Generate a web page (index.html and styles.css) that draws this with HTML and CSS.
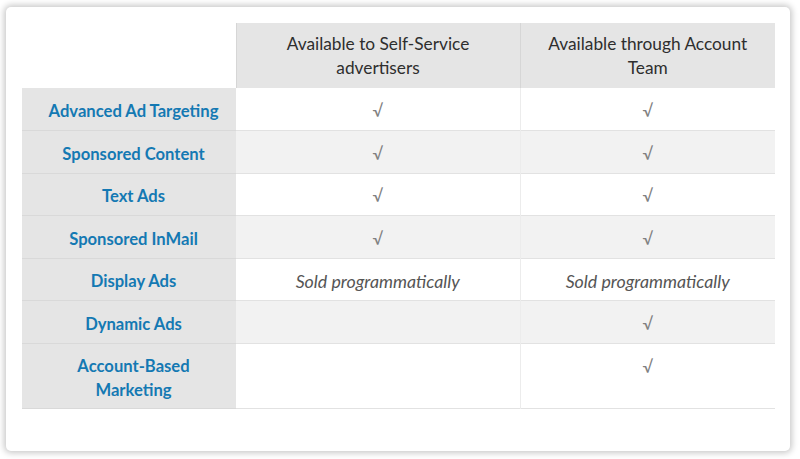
FILE: index.html
```html
<!DOCTYPE html>
<html>
<head>
<meta charset="utf-8">
<link rel="stylesheet" href="styles.css">
</head>
<body>
<div class="card">
  <table class="cmp">
    <colgroup>
      <col class="c1"><col class="c2"><col class="c3">
    </colgroup>
    <thead>
      <tr>
        <th class="blank"></th>
        <th class="head">Available to Self-Service<br>advertisers</th>
        <th class="head">Available through Account<br>Team</th>
      </tr>
    </thead>
    <tbody>
      <tr><th class="label">Advanced Ad Targeting</th><td>√</td><td>√</td></tr>
      <tr class="alt"><th class="label">Sponsored Content</th><td>√</td><td>√</td></tr>
      <tr><th class="label">Text Ads</th><td>√</td><td>√</td></tr>
      <tr class="alt"><th class="label">Sponsored InMail</th><td>√</td><td>√</td></tr>
      <tr><th class="label">Display Ads</th><td class="note">Sold programmatically</td><td class="note">Sold programmatically</td></tr>
      <tr class="alt"><th class="label">Dynamic Ads</th><td></td><td>√</td></tr>
      <tr class="tall"><th class="label">Account-Based<br>Marketing</th><td></td><td>√</td></tr>
    </tbody>
  </table>
</div>
</body>
</html>
```
FILE: styles.css
```css
html, body {
  margin: 0;
  padding: 0;
  background: #ffffff;
}
body {
  font-family: "Lato", "Source Sans Pro", "Noto Sans", sans-serif;
  padding: 7px 10px 8px 6px;
}
.card {
  width: 784px;
  height: 444px;
  box-sizing: border-box;
  background: #fff;
  border-radius: 5px;
  box-shadow: 0 0 6px 2px rgba(0,0,0,0.22);
  padding: 16px 15px 0 16px;
}
.cmp {
  border-collapse: collapse;
  width: 753px;
  table-layout: fixed;
}
.c1 { width: 214px; }
.c2 { width: 284px; }
.c3 { width: 255px; }
th, td {
  padding: 0;
  text-align: center;
  vertical-align: middle;
  line-height: 24px;
}
.blank {
  background: #fff;
}
.head {
  background: #e5e5e5;
  color: #2e2e2e;
  font-weight: 400;
  font-size: 17.3px;
  height: 65px;
  border-left: 1px solid #d6d6d6;
}
.head:first-of-type { border-left: none; }
tbody tr {
  height: 42.5px;
  border-bottom: 1px solid #e2e2e2;
}
tbody th, tbody td {
  padding-top: 4px;
}
tbody tr.tall {
  height: 65px;
}
.label {
  background: #e5e5e5;
  color: #1479b3;
  font-weight: 700;
  font-size: 16.6px;
  border-bottom: 1px solid #d9d9d9;
  padding-left: 9px;
}
td {
  color: #808080;
  font-size: 17px;
  background: #fff;
}
td + td {
  border-left: 1px solid #ececec;
}
tr.alt td {
  background: #f2f2f2;
}
tr.tall th, tr.tall td { vertical-align: top; padding-top: 10px; }
tr.tall td { padding-top: 11px; }
td.note {
  font-style: italic;
  font-size: 17.8px;
  color: #555;
}
```
